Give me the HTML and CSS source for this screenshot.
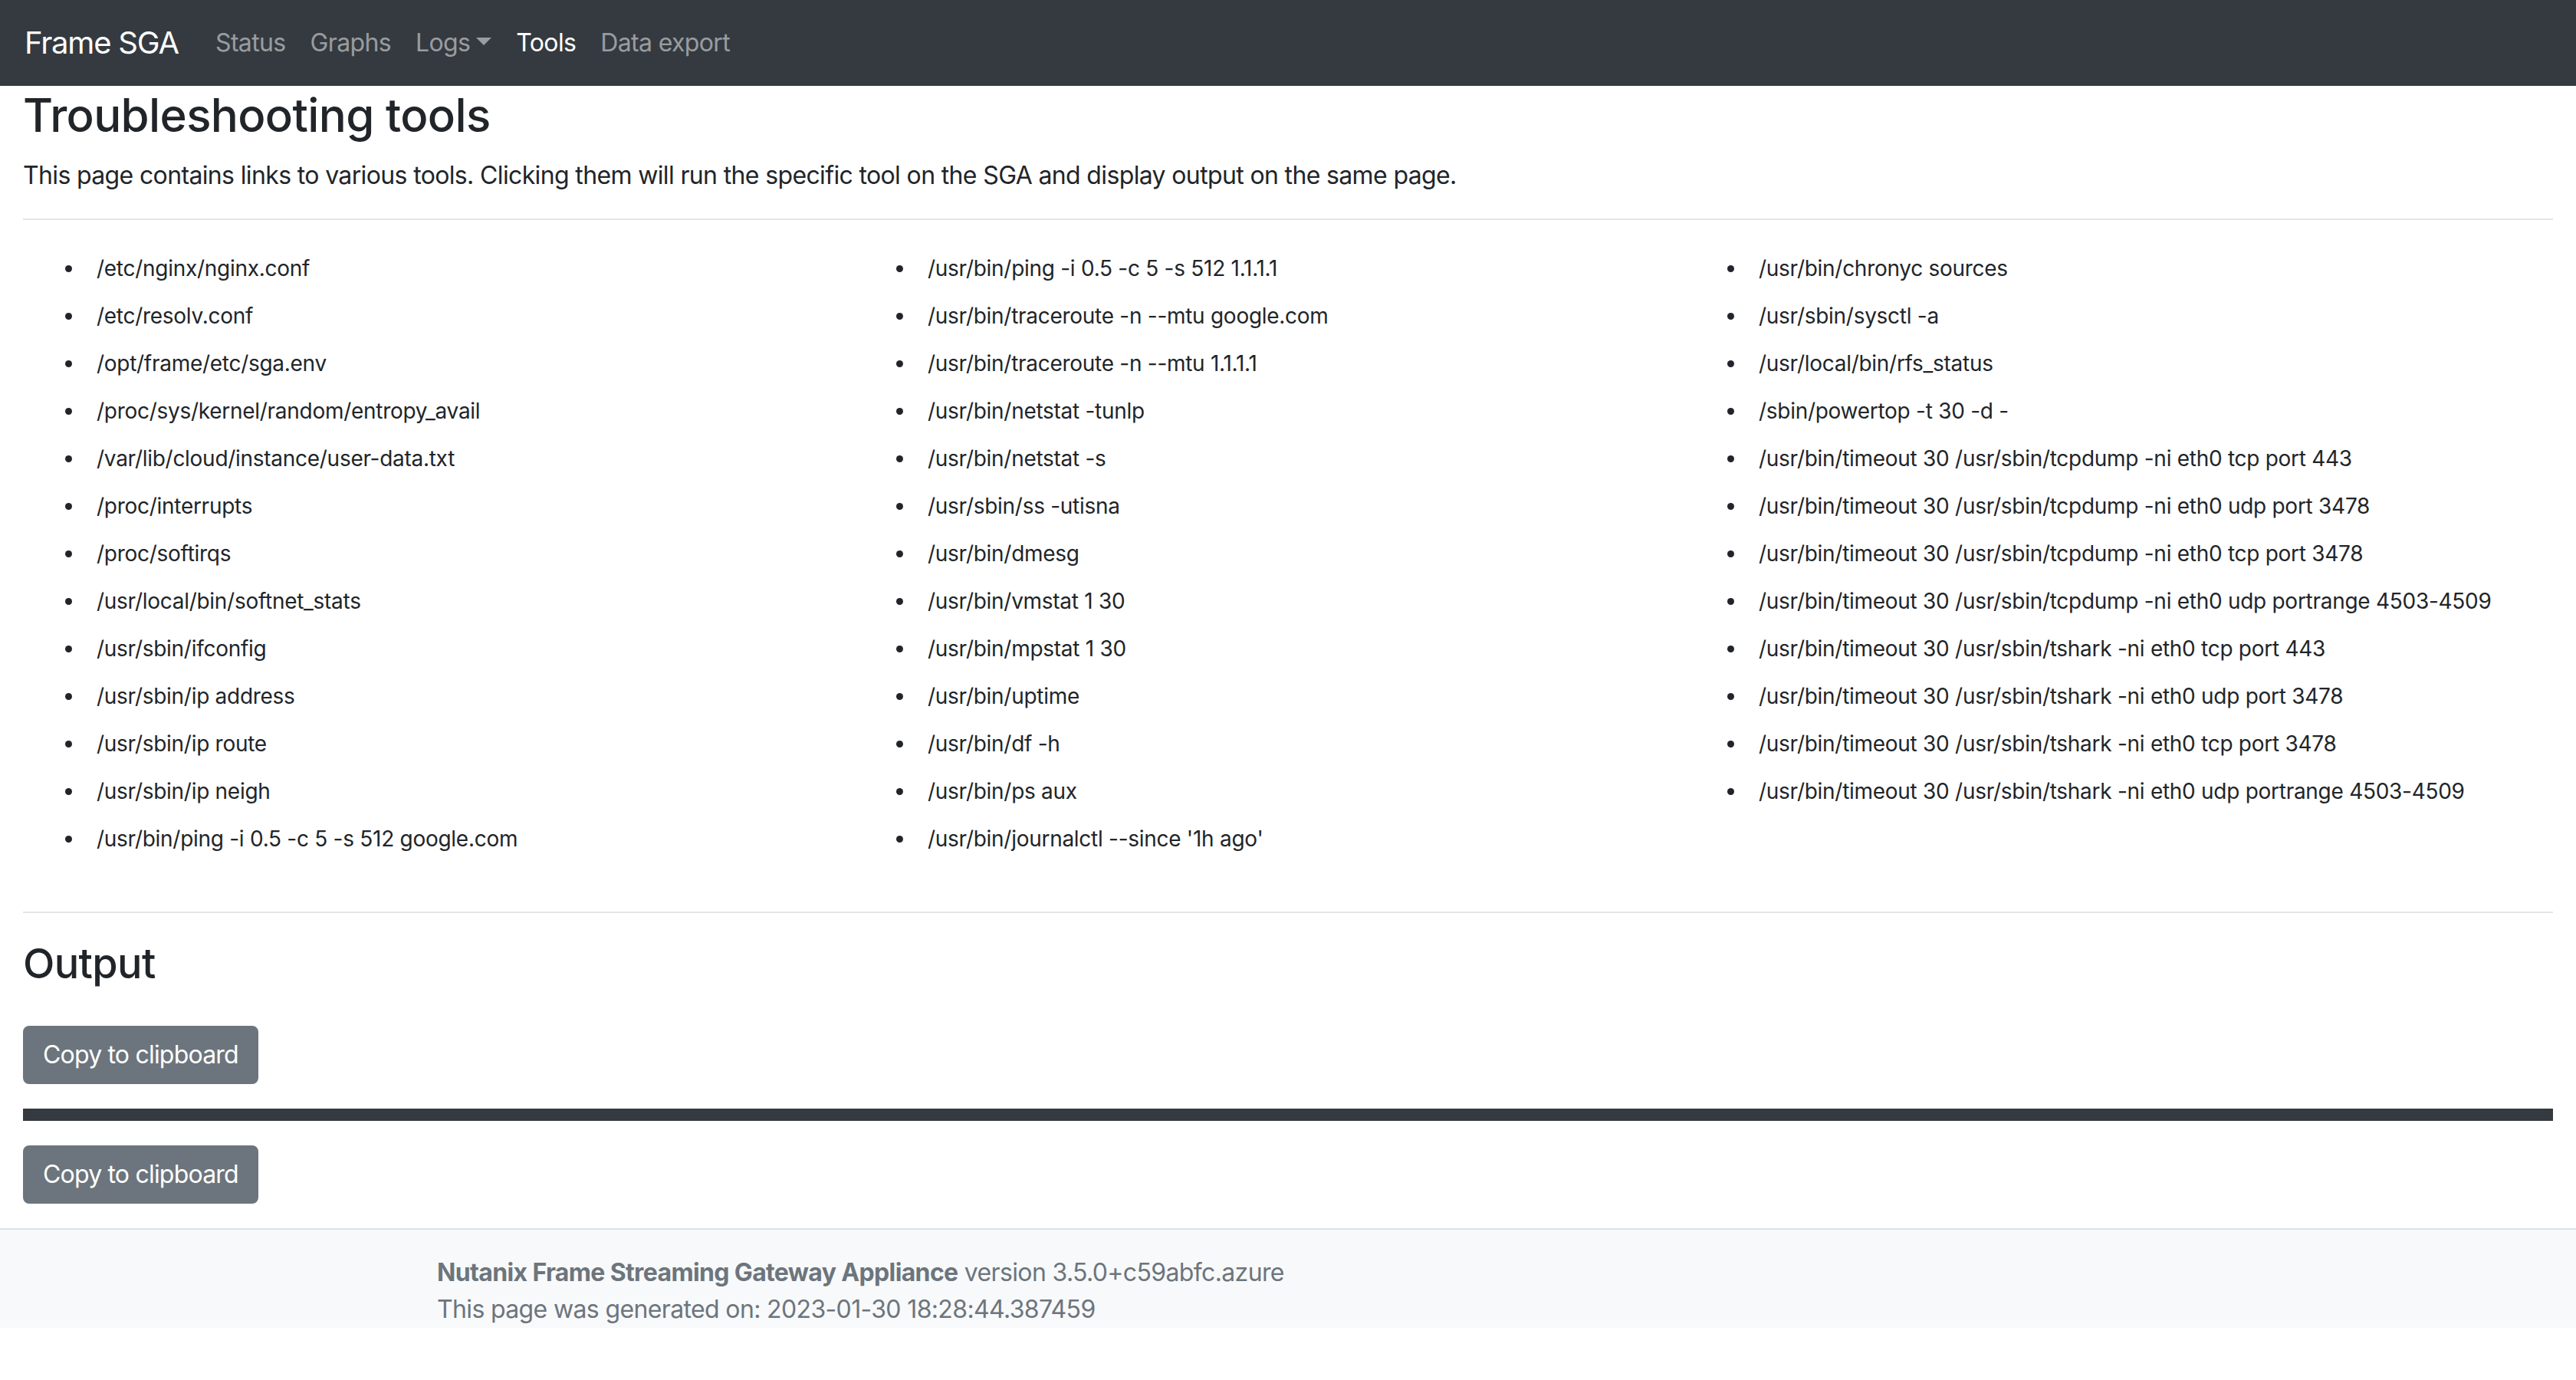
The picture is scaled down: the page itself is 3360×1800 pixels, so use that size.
FILE: index.html
```html
<!DOCTYPE html>
<html lang="en">
<head>
<meta charset="utf-8">
<title>Frame SGA - Tools</title>
<link rel="stylesheet" href="styles.css">
</head>
<body>
<nav class="navbar">
  <a class="brand" href="#">Frame SGA</a>
  <ul class="nav">
    <li><a class="nav-link" href="#">Status</a></li>
    <li><a class="nav-link" href="#">Graphs</a></li>
    <li><a class="nav-link dropdown-toggle" href="#">Logs</a></li>
    <li><a class="nav-link active" href="#">Tools</a></li>
    <li><a class="nav-link" href="#">Data export</a></li>
  </ul>
</nav>
<main class="page">
  <h1 class="title">Troubleshooting tools</h1>
  <p class="lead">This page contains links to various tools. Clicking them will run the specific tool on the SGA and display output on the same page.</p>
  <hr class="rule">
  <ul class="tools">
    <li><a href="#">/etc/nginx/nginx.conf</a></li>
    <li><a href="#">/etc/resolv.conf</a></li>
    <li><a href="#">/opt/frame/etc/sga.env</a></li>
    <li><a href="#">/proc/sys/kernel/random/entropy_avail</a></li>
    <li><a href="#">/var/lib/cloud/instance/user-data.txt</a></li>
    <li><a href="#">/proc/interrupts</a></li>
    <li><a href="#">/proc/softirqs</a></li>
    <li><a href="#">/usr/local/bin/softnet_stats</a></li>
    <li><a href="#">/usr/sbin/ifconfig</a></li>
    <li><a href="#">/usr/sbin/ip address</a></li>
    <li><a href="#">/usr/sbin/ip route</a></li>
    <li><a href="#">/usr/sbin/ip neigh</a></li>
    <li><a href="#">/usr/bin/ping -i 0.5 -c 5 -s 512 google.com</a></li>
    <li><a href="#">/usr/bin/ping -i 0.5 -c 5 -s 512 1.1.1.1</a></li>
    <li><a href="#">/usr/bin/traceroute -n --mtu google.com</a></li>
    <li><a href="#">/usr/bin/traceroute -n --mtu 1.1.1.1</a></li>
    <li><a href="#">/usr/bin/netstat -tunlp</a></li>
    <li><a href="#">/usr/bin/netstat -s</a></li>
    <li><a href="#">/usr/sbin/ss -utisna</a></li>
    <li><a href="#">/usr/bin/dmesg</a></li>
    <li><a href="#">/usr/bin/vmstat 1 30</a></li>
    <li><a href="#">/usr/bin/mpstat 1 30</a></li>
    <li><a href="#">/usr/bin/uptime</a></li>
    <li><a href="#">/usr/bin/df -h</a></li>
    <li><a href="#">/usr/bin/ps aux</a></li>
    <li><a href="#">/usr/bin/journalctl --since '1h ago'</a></li>
    <li><a href="#">/usr/bin/chronyc sources</a></li>
    <li><a href="#">/usr/sbin/sysctl -a</a></li>
    <li><a href="#">/usr/local/bin/rfs_status</a></li>
    <li><a href="#">/sbin/powertop -t 30 -d -</a></li>
    <li><a href="#">/usr/bin/timeout 30 /usr/sbin/tcpdump -ni eth0 tcp port 443</a></li>
    <li><a href="#">/usr/bin/timeout 30 /usr/sbin/tcpdump -ni eth0 udp port 3478</a></li>
    <li><a href="#">/usr/bin/timeout 30 /usr/sbin/tcpdump -ni eth0 tcp port 3478</a></li>
    <li><a href="#">/usr/bin/timeout 30 /usr/sbin/tcpdump -ni eth0 udp portrange 4503-4509</a></li>
    <li><a href="#">/usr/bin/timeout 30 /usr/sbin/tshark -ni eth0 tcp port 443</a></li>
    <li><a href="#">/usr/bin/timeout 30 /usr/sbin/tshark -ni eth0 udp port 3478</a></li>
    <li><a href="#">/usr/bin/timeout 30 /usr/sbin/tshark -ni eth0 tcp port 3478</a></li>
    <li><a href="#">/usr/bin/timeout 30 /usr/sbin/tshark -ni eth0 udp portrange 4503-4509</a></li>
  </ul>
  <hr class="rule">
  <h2 class="subtitle">Output</h2>
  <div class="actions"><button class="btn" type="button">Copy to clipboard</button></div>
  <pre class="output"></pre>
  <div class="actions"><button class="btn" type="button">Copy to clipboard</button></div>
</main>
<footer class="footer">
  <div class="container">
    <div class="footer-line"><strong>Nutanix Frame Streaming Gateway Appliance</strong> version 3.5.0+c59abfc.azure</div>
    <div class="footer-line">This page was generated on: 2023-01-30 18:28:44.387459</div>
  </div>
</footer>
</body>
</html>
```

FILE: styles.css
```css
html {
  font-size: 32px;
}

body {
  margin: 0;
  font-family: Inter, "Noto Sans", "Liberation Sans", sans-serif;
  font-size: 32px;
  line-height: 48px;
  letter-spacing: -0.02em;
  color: #212529;
  background: #fff;
}

a {
  color: inherit;
  text-decoration: none;
}

/* navbar */
.navbar {
  display: flex;
  align-items: center;
  height: 112px;
  box-sizing: border-box;
  padding: 16px 32px;
  background: #343a40;
}

.brand {
  font-size: 40px;
  line-height: 60px;
  letter-spacing: -0.03em;
  padding: 10px 0;
  margin-right: 32px;
  color: #fff;
  white-space: nowrap;
}

.nav {
  display: flex;
  list-style: none;
  margin: 0;
  padding: 0;
}

.nav-link {
  display: block;
  padding: 16px;
  color: rgba(255, 255, 255, 0.5);
}

.nav-link.active {
  color: #fff;
}

.dropdown-toggle::after {
  content: "";
  display: inline-block;
  margin-left: 8px;
  vertical-align: 8px;
  border-top: 10px solid;
  border-right: 10px solid transparent;
  border-left: 10px solid transparent;
}

/* page */
.page {
  padding: 0 30px;
}

.title {
  margin: 0 0 16px;
  font-size: 60px;
  line-height: 77px;
  font-weight: 500;
}

.subtitle {
  margin: 0 0 48px;
  font-size: 54px;
  line-height: 67px;
  font-weight: 500;
}

.lead {
  margin: 0 0 32px;
}

.rule {
  margin: 32px 0;
  border: 0;
  border-top: 2px solid rgba(0, 0, 0, 0.1);
}

.tools {
  margin: 0 0 64px;
  padding-left: 80px;
  column-count: 3;
  column-gap: 32px;
  font-size: 28px;
  line-height: 42px;
  letter-spacing: -0.01em;
}

.tools li {
  padding: 10px 0 10px 16px;
  break-inside: avoid;
}

.actions {
  margin-top: 32px;
}

.btn {
  display: inline-block;
  padding: 12px 24px;
  font-family: inherit;
  font-size: 32px;
  line-height: 48px;
  letter-spacing: -0.025em;
  color: #fff;
  background: #6c757d;
  border: 2px solid #6c757d;
  border-radius: 8px;
}

.output {
  height: 16px;
  margin: 32px 0 0;
  background: #343a40;
}

/* footer */
.footer {
  margin-top: 32px;
  padding-top: 32px;
  background: #f8f9fa;
  border-top: 2px solid #dee2e6;
  color: #6c757d;
}

.container {
  max-width: 2220px;
  margin: 0 auto;
  padding: 0 30px;
}
```
